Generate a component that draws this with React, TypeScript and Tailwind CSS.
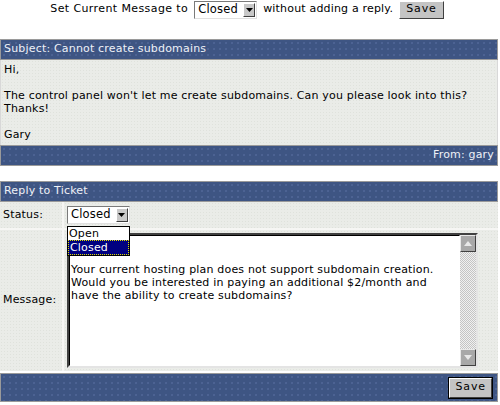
import React from "react";

const font = { fontFamily: '"DejaVu Sans", Verdana, sans-serif' };

const FakeSelect = ({ value }: { value: string }) => (
  <div className="flex h-[18px] items-stretch border border-t-[#7a7a7a] border-l-[#7a7a7a] border-r-[#e0e0e0] border-b-[#e0e0e0] bg-white">
    <span className="flex flex-1 items-center pl-[3px] pr-[4px] text-[11.5px] leading-none">{value}</span>
    <span className="m-[1px] flex w-[15px] items-center justify-center border border-t-white border-l-white border-r-[#404040] border-b-[#404040] bg-[#c8c8c8]">
      <svg width="7" height="4" viewBox="0 0 7 4">
        <path d="M0 0h7L3.5 4z" fill="#000" />
      </svg>
    </span>
  </div>
);

const Button = ({ focused }: { focused?: boolean }) => (
  <div className={focused ? "border border-black" : ""}>
    <div
      className={`flex items-center border border-t-white border-l-white border-r-[#404040] border-b-[#404040] bg-[#c4c4c4] tracking-[0.9px] ${
        focused ? "h-[20px] px-[5px]" : "h-[18px] px-[6px]"
      }`}
    >
      Save
    </div>
  </div>
);

const bandBg =
  "bg-[#3e5583] bg-[radial-gradient(#4d6393_0.7px,transparent_0.9px)] bg-[length:6px_6px]";
const bodyBg =
  "bg-[#eaece8] bg-[radial-gradient(#dfe2dc_0.6px,transparent_0.8px)] bg-[length:3px_3px]";

const Band = ({ children, right }: { children?: React.ReactNode; right?: boolean }) => (
  <div
    className={`flex h-[21px] items-center border border-[#9a9a9a] px-[3px] text-[#eef1f7] ${bandBg} ${
      right ? "justify-end" : ""
    }`}
  >
    {children}
  </div>
);

const ScrollArrow = ({ up }: { up?: boolean }) => (
  <div className="flex h-[17px] w-[16px] items-center justify-center border border-t-[#e8e8e8] border-l-[#e8e8e8] border-r-[#404040] border-b-[#404040] bg-[#a8a8a8]">
    <svg width="8" height="5" viewBox="0 0 8 5">
      <path d={up ? "M0 5h8L4 0z" : "M0 0h8L4 5z"} fill="#e8e8e8" />
    </svg>
  </div>
);

export default function App() {
  return (
    <div
      className="relative h-[405px] w-[500px] overflow-hidden bg-white text-[11px] tracking-[0.18px] text-black"
      style={font}
    >
      <div className="flex h-[19px] items-center justify-center gap-[6px] pr-[6px]">
        <span className="tracking-[0.4px]">Set Current Message to</span>
        <div className="w-[63px]">
          <FakeSelect value="Closed" />
        </div>
        <span>without adding a reply.</span>
        <Button />
      </div>

      <div className="mt-[20px] w-[498px]">
        <Band>Subject: Cannot create subdomains</Band>
        <div className={`border-x border-[#d8d8d8] px-[3px] pb-[4px] pt-[3px] leading-[13px] ${bodyBg}`}>
          <p>Hi,</p>
          <p>&nbsp;</p>
          <p>The control panel won't let me create subdomains. Can you please look into this?</p>
          <p>Thanks!</p>
          <p>&nbsp;</p>
          <p>Gary</p>
        </div>
        <Band right>From: gary</Band>

        <div className="h-[15px]" />

        <Band>Reply to Ticket</Band>
        <div className="grid grid-cols-[62px_1fr] gap-[2px] bg-[#f6f6f4]">
          <div className={`flex items-center px-[3px] ${bodyBg}`}>Status:</div>
          <div className={`py-[4px] pl-[3px] ${bodyBg}`}>
            <div className="w-[63px]">
              <FakeSelect value="Closed" />
            </div>
          </div>
          <div className={`flex items-center px-[3px] ${bodyBg}`}>Message:</div>
          <div className={`py-[3px] pl-[3px] ${bodyBg}`}>
            <div className="flex h-[135px] w-[411px] border-2 border-t-[#404040] border-l-[#404040] border-r-[#e4e4e4] border-b-[#e4e4e4] bg-white">
              <div className="flex-1 border border-t-black border-l-black border-r-transparent border-b-transparent px-[1px] pt-[1px] leading-[13px]">
                <p>&nbsp;</p>
                <p>&nbsp;</p>
                <p>Your current hosting plan does not support subdomain creation.</p>
                <p>Would you be interested in paying an additional $2/month and</p>
                <p>have the ability to create subdomains?</p>
              </div>
              <div className="flex w-[16px] flex-col bg-[repeating-conic-gradient(#c4c4c4_0_25%,#f0f0f0_0_50%)] bg-[length:2px_2px]">
                <ScrollArrow up />
                <div className="flex-1" />
                <ScrollArrow />
              </div>
            </div>
          </div>
        </div>
        <div className={`mt-[2px] flex h-[29px] items-center justify-end border border-[#9a9a9a] pr-[4px] ${bandBg}`}>
          <Button focused />
        </div>
      </div>

      <div className="absolute left-[67px] top-[226px] w-[63px] border border-black bg-white leading-[13px]">
        <div className="px-[1px]">Open</div>
        <div className="border border-dotted border-[#e0e000] bg-[#000080] px-[1px] text-white">Closed</div>
      </div>
    </div>
  );
}
